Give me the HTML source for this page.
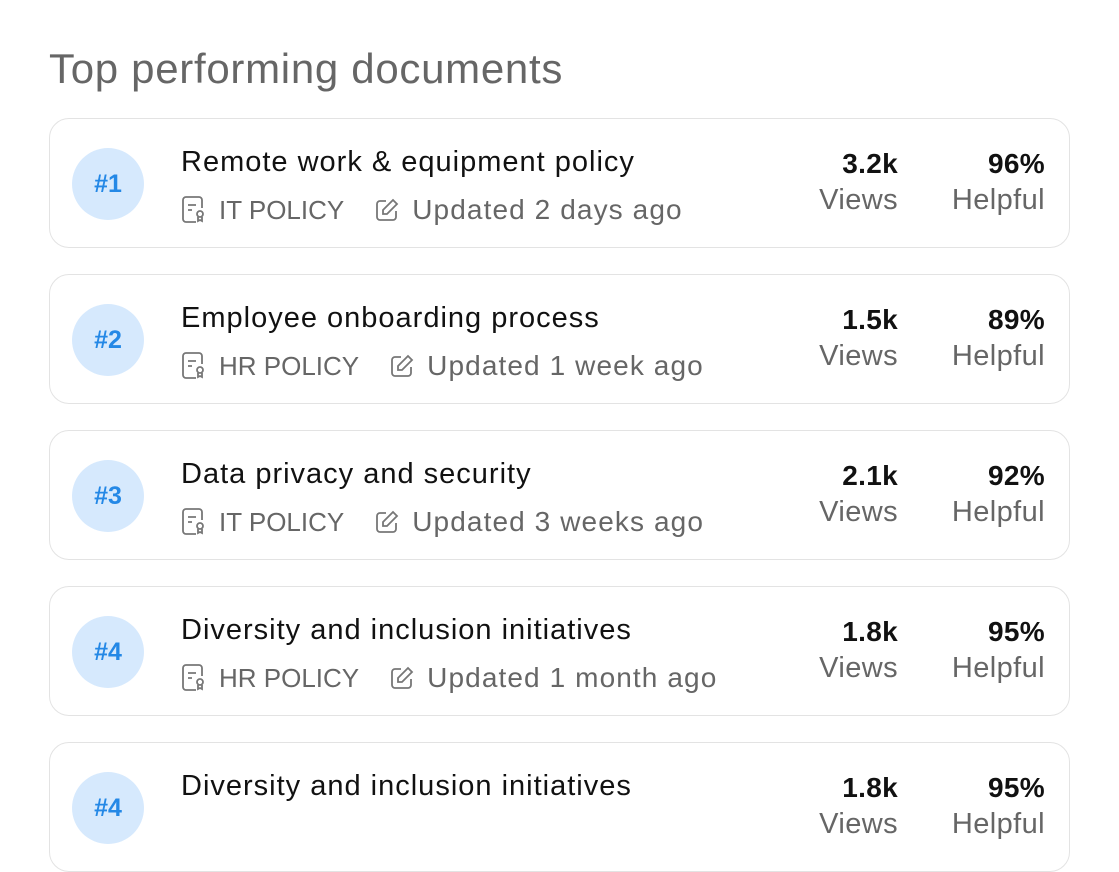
<!DOCTYPE html>
<html><head><style>
*{margin:0;padding:0;box-sizing:border-box}
body{width:1119px;height:807px;overflow:hidden;background:#fff;font-family:"Liberation Sans",sans-serif;position:relative}
h1{position:absolute;left:49px;top:45px;font-weight:400;font-size:42px;color:#666;letter-spacing:0.7px}
.card{position:absolute;left:49px;width:1021px;height:130px;border:1.5px solid #e3e3e3;border-radius:20px;background:#fff}
.num{position:absolute;left:22px;top:29px;width:72px;height:72px;border-radius:50%;background:#d6e9fd;color:#2488e6;font-size:25px;font-weight:700;display:flex;align-items:center;justify-content:center}
.title{position:absolute;left:131px;top:27px;font-size:29px;color:#111;white-space:nowrap;letter-spacing:1px}
.meta{position:absolute;left:131px;top:75px;font-size:26px;color:#666;display:flex;align-items:center;white-space:nowrap}
.meta svg{margin-right:12px}
.meta .u{font-size:28px;letter-spacing:1.1px}
.stat{position:absolute;top:28px;text-align:right}
.stat b{display:block;font-size:28px;color:#111;line-height:34px;letter-spacing:0.3px}
.stat span{display:block;font-size:29px;color:#666;line-height:38px;letter-spacing:0.4px}
.v{right:171px}.h{right:24px}
</style></head><body>
<h1>Top performing documents</h1>
<div class="card" style="top:118px"><div class="num">#1</div><div class="title">Remote work &amp; equipment policy</div>
<div class="meta"><svg width="26" height="28" viewBox="0 0 26 28" fill="none" stroke="#777" stroke-width="1.8"><path d="M15 26H5a3 3 0 0 1-3-3V4a3 3 0 0 1 3-3h13a3 3 0 0 1 3 3v8"/><path d="M7 9h8M7 14h4"/><circle cx="19" cy="18" r="3"/><path d="M17 21v4l2-1 2 1v-4"/></svg>IT POLICY<svg style="margin-left:30px" width="26" height="26" viewBox="0 0 26 26" fill="none" stroke="#777" stroke-width="1.8"><path d="M12 4H6a3 3 0 0 0-3 3v13a3 3 0 0 0 3 3h13a3 3 0 0 0 3-3v-6"/><path d="M19 3l4 4-10 10H9v-4z"/></svg><span class="u">Updated 2 days ago</span></div>
<div class="stat v"><b>3.2k</b><span>Views</span></div><div class="stat h"><b>96%</b><span>Helpful</span></div></div>

<div class="card" style="top:274px"><div class="num">#2</div><div class="title">Employee onboarding process</div>
<div class="meta"><svg width="26" height="28" viewBox="0 0 26 28" fill="none" stroke="#777" stroke-width="1.8"><path d="M15 26H5a3 3 0 0 1-3-3V4a3 3 0 0 1 3-3h13a3 3 0 0 1 3 3v8"/><path d="M7 9h8M7 14h4"/><circle cx="19" cy="18" r="3"/><path d="M17 21v4l2-1 2 1v-4"/></svg>HR POLICY<svg style="margin-left:30px" width="26" height="26" viewBox="0 0 26 26" fill="none" stroke="#777" stroke-width="1.8"><path d="M12 4H6a3 3 0 0 0-3 3v13a3 3 0 0 0 3 3h13a3 3 0 0 0 3-3v-6"/><path d="M19 3l4 4-10 10H9v-4z"/></svg><span class="u">Updated 1 week ago</span></div>
<div class="stat v"><b>1.5k</b><span>Views</span></div><div class="stat h"><b>89%</b><span>Helpful</span></div></div>

<div class="card" style="top:430px"><div class="num">#3</div><div class="title">Data privacy and security</div>
<div class="meta"><svg width="26" height="28" viewBox="0 0 26 28" fill="none" stroke="#777" stroke-width="1.8"><path d="M15 26H5a3 3 0 0 1-3-3V4a3 3 0 0 1 3-3h13a3 3 0 0 1 3 3v8"/><path d="M7 9h8M7 14h4"/><circle cx="19" cy="18" r="3"/><path d="M17 21v4l2-1 2 1v-4"/></svg>IT POLICY<svg style="margin-left:30px" width="26" height="26" viewBox="0 0 26 26" fill="none" stroke="#777" stroke-width="1.8"><path d="M12 4H6a3 3 0 0 0-3 3v13a3 3 0 0 0 3 3h13a3 3 0 0 0 3-3v-6"/><path d="M19 3l4 4-10 10H9v-4z"/></svg><span class="u">Updated 3 weeks ago</span></div>
<div class="stat v"><b>2.1k</b><span>Views</span></div><div class="stat h"><b>92%</b><span>Helpful</span></div></div>

<div class="card" style="top:586px"><div class="num">#4</div><div class="title">Diversity and inclusion initiatives</div>
<div class="meta"><svg width="26" height="28" viewBox="0 0 26 28" fill="none" stroke="#777" stroke-width="1.8"><path d="M15 26H5a3 3 0 0 1-3-3V4a3 3 0 0 1 3-3h13a3 3 0 0 1 3 3v8"/><path d="M7 9h8M7 14h4"/><circle cx="19" cy="18" r="3"/><path d="M17 21v4l2-1 2 1v-4"/></svg>HR POLICY<svg style="margin-left:30px" width="26" height="26" viewBox="0 0 26 26" fill="none" stroke="#777" stroke-width="1.8"><path d="M12 4H6a3 3 0 0 0-3 3v13a3 3 0 0 0 3 3h13a3 3 0 0 0 3-3v-6"/><path d="M19 3l4 4-10 10H9v-4z"/></svg><span class="u">Updated 1 month ago</span></div>
<div class="stat v"><b>1.8k</b><span>Views</span></div><div class="stat h"><b>95%</b><span>Helpful</span></div></div>

<div class="card" style="top:742px"><div class="num">#4</div><div class="title">Diversity and inclusion initiatives</div>
<div class="stat v"><b>1.8k</b><span>Views</span></div><div class="stat h"><b>95%</b><span>Helpful</span></div></div>
</body></html>
